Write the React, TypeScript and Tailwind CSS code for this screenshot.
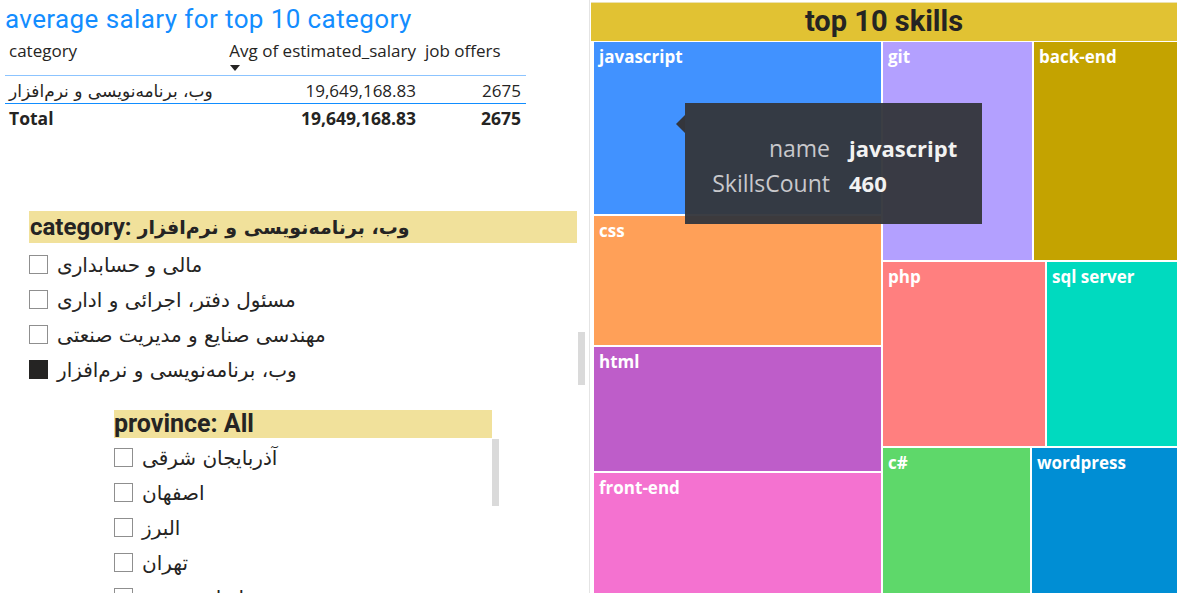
const categories = [
  { name: "مالی و حسابداری", checked: false },
  { name: "مسئول دفتر، اجرائی و اداری", checked: false },
  { name: "مهندسی صنایع و مدیریت صنعتی", checked: false },
  { name: "وب، برنامه\u200cنویسی و نرم\u200cافزار", checked: true },
];

const provinces = ["آذربایجان شرقی", "اصفهان", "البرز", "تهران", "خراسان رضوی"];

function CheckRow(props: { label: string; checked?: boolean }) {
  return (
    <div className="flex h-[35px] items-center gap-[9px]">
      <div
        className={`h-[19px] w-[19px] shrink-0 border ${
          props.checked
            ? "border-[#252423] bg-[#252423]"
            : "border-[#8f8f8f] bg-white"
        }`}
      />
      <span className="text-[20px] leading-[26px] text-[#252423]">
        {props.label}
      </span>
    </div>
  );
}

function Tile(props: { label: string; className: string }) {
  return (
    <div
      className={`pl-[5px] pt-[4px] font-['Open_Sans',sans-serif] text-[17px] font-bold leading-[22px] text-white ${props.className}`}
    >
      {props.label}
    </div>
  );
}

function SalaryTable() {
  return (
    <div className="ml-[5px] w-[521px] font-['Open_Sans','DejaVu_Sans',sans-serif] text-[17px] text-[#252423]">
      <div className="grid h-[42px] grid-cols-[215px_196px_110px] border-b border-[#8cc4ff] pt-[6px] leading-[22px]">
        <div className="pl-[4px]">category</div>
        <div className="flex justify-end">
          <div className="flex flex-col items-start">
            <span>Avg of estimated_salary</span>
            <div className="ml-[1px] mt-[3px] h-0 w-0 border-x-[5px] border-t-[6px] border-x-transparent border-t-[#252423]" />
          </div>
        </div>
        <div className="pl-[9px]">job offers</div>
      </div>
      <div className="grid h-[28px] grid-cols-[215px_196px_110px] border-b border-[#118dff] pt-[4px] leading-[22px]">
        <div className="pl-[4px] font-['DejaVu_Sans',sans-serif]">
          وب، برنامه‌نویسی و نرم‌افزار
        </div>
        <div className="text-right">19,649,168.83</div>
        <div className="pr-[5px] text-right">2675</div>
      </div>
      <div className="grid h-[28px] grid-cols-[215px_196px_110px] pt-[3px] text-[17.5px] font-bold leading-[22px]">
        <div className="pl-[4px]">Total</div>
        <div className="text-right">19,649,168.83</div>
        <div className="pr-[5px] text-right">2675</div>
      </div>
    </div>
  );
}

export default function App() {
  return (
    <div className="flex h-[593px] w-[1177px] overflow-hidden bg-white font-['DejaVu_Sans',sans-serif] text-[#252423]">
      <div className="flex w-[589px] shrink-0 flex-col">
        <h1 className="pl-[5px] pt-[4px] font-['Roboto',sans-serif] text-[26px] leading-[30px] tracking-[0.4px] text-[#138dff]">
          average salary for top 10 category
        </h1>
        <SalaryTable />

        <div className="ml-[29px] mt-[79px] flex flex-col">
          <div className="flex h-[32px] w-[548px] items-center gap-[6px] bg-[#f1e19b] pl-[1px] font-bold">
            <span className="font-['Roboto',sans-serif] text-[24px]">category:</span>
            <span className="text-[19px]">وب، برنامه‌نویسی و نرم‌افزار</span>
          </div>
          <div className="flex">
            <div className="w-[549px] pt-[4px]">
              {categories.map((c) => (
                <CheckRow key={c.name} label={c.name} checked={c.checked} />
              ))}
            </div>
            <div className="w-[7px]">
              <div className="mt-[89px] h-[53px] bg-[#dadada]" />
            </div>
          </div>
        </div>

        <div className="ml-[114px] mt-[23px] flex flex-col">
          <div className="flex h-[28px] w-[378px] items-center bg-[#f1e19b] font-['Roboto',sans-serif] text-[25px] font-bold leading-[28px]">
            province: All
          </div>
          <div className="flex">
            <div className="w-[378px] pt-[2px]">
              {provinces.map((p) => (
                <CheckRow key={p} label={p} />
              ))}
            </div>
            <div className="w-[7px]">
              <div className="mt-px h-[67px] bg-[#dadada]" />
            </div>
          </div>
        </div>
      </div>

      <div className="w-px shrink-0 bg-[#e4e4e4]" />

      <div className="flex flex-1 flex-col pt-[2px]">
        <div className="ml-px flex h-[39px] items-center justify-center border-t border-[#ece2b0] bg-[#e1c233] font-['Roboto',sans-serif] text-[29px] font-bold text-[#252423]">
          top 10 skills
        </div>
        <div className="relative mt-px flex flex-1 gap-[2px] pl-[4px]">
          <div className="flex w-[287px] flex-col gap-[2px]">
            <Tile label="javascript" className="h-[172px] bg-[#4192ff]" />
            <Tile label="css" className="h-[129px] bg-[#ffa058]" />
            <Tile label="html" className="h-[124px] bg-[#be5dc9]" />
            <Tile label="front-end" className="flex-1 bg-[#f472d0]" />
          </div>
          <div className="flex flex-1 flex-col gap-[2px]">
            <div className="flex h-[218px] gap-[2px]">
              <Tile label="git" className="w-[149px] bg-[#b3a0ff]" />
              <Tile label="back-end" className="flex-1 bg-[#c4a300]" />
            </div>
            <div className="flex h-[184px] gap-[2px]">
              <Tile label="php" className="w-[162px] bg-[#ff7f7f]" />
              <Tile label="sql server" className="flex-1 bg-[#00dabf]" />
            </div>
            <div className="flex flex-1 gap-[2px]">
              <Tile label="c#" className="w-[147px] bg-[#5ed86a]" />
              <Tile label="wordpress" className="flex-1 bg-[#008ed4]" />
            </div>
          </div>

          <div className="absolute left-[95px] top-[61px] h-[121px] w-[297px] bg-[#34363c]/[0.96] pl-[23px] pt-[28px] font-['Open_Sans',sans-serif] text-[23px] leading-[35px]">
            <div className="absolute left-[-9px] top-[12px] h-0 w-0 border-y-[9px] border-r-[9px] border-y-transparent border-r-[#34363c]" />
            <div className="grid grid-cols-[122px_auto] gap-x-[19px]">
              <span className="text-right text-[#c8c8cc]">name</span>
              <span className="text-[22px] font-bold text-[#f2f2f2]">javascript</span>
              <span className="text-right text-[#c8c8cc]">SkillsCount</span>
              <span className="text-[22px] font-bold text-[#f2f2f2]">460</span>
            </div>
          </div>
        </div>
      </div>
    </div>
  );
}
